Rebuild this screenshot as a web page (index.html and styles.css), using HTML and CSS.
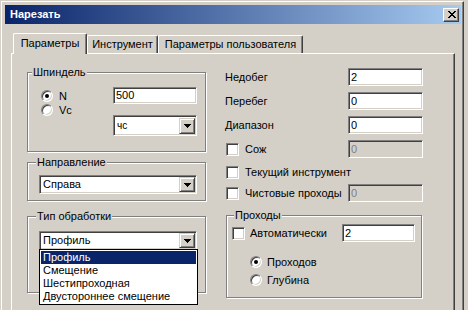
FILE: index.html
```html
<!DOCTYPE html>
<html lang="ru">
<head>
<meta charset="utf-8">
<title>Нарезать</title>
<link rel="stylesheet" href="styles.css">
</head>
<body>
<div class="window">
  <div class="titlebar">
    <span class="title">Нарезать</span>
    <span class="close">
      <svg width="8" height="7" viewBox="0 0 8 7" shape-rendering="crispEdges">
        <path d="M0 0h2v1h-2zM6 0h2v1h-2zM1 1h2v1h-2zM5 1h2v1h-2zM2 2h4v1h-4zM3 3h2v1h-2zM2 4h4v1h-4zM1 5h2v1h-2zM5 5h2v1h-2zM0 6h2v1h-2zM6 6h2v1h-2z" fill="#000"/>
      </svg>
    </span>
  </div>
  <div class="client">
    <div class="tabs">
      <div class="tab tab-sel">Параметры</div>
      <div class="tab tab-tool">Инструмент</div>
      <div class="tab tab-user">Параметры пользователя</div>
    </div>
    <div class="panel">
      <div class="col-left">
        <div class="group g-spindle">
          <div class="gtitle gt-spindle">Шпиндель</div>
          <div class="spindle">
            <div class="radios">
              <div class="radio-row"><span class="radio on"></span><span>N</span></div>
              <div class="radio-row"><span class="radio"></span><span>Vc</span></div>
            </div>
            <div class="spindle-fields">
              <div class="edit e-speed">500</div>
              <div class="combo c-unit"><span class="ctext">чс</span><span class="cbtn"><svg width="7" height="4" viewBox="0 0 7 4" shape-rendering="crispEdges"><path d="M0 0h7v1h-7zM1 1h5v1h-5zM2 2h3v1h-3zM3 3h1v1h-1z" fill="#000"/></svg></span></div>
            </div>
          </div>
        </div>
        <div class="group g-dir">
          <div class="gtitle gt-wide">Направление</div>
          <div class="combo c-wide c-dir"><span class="ctext">Справа</span><span class="cbtn"><svg width="7" height="4" viewBox="0 0 7 4" shape-rendering="crispEdges"><path d="M0 0h7v1h-7zM1 1h5v1h-5zM2 2h3v1h-3zM3 3h1v1h-1z" fill="#000"/></svg></span></div>
        </div>
        <div class="group g-type">
          <div class="gtitle gt-wide">Тип обработки</div>
          <div class="combo c-wide c-type"><span class="ctext">Профиль</span><span class="cbtn"><svg width="7" height="4" viewBox="0 0 7 4" shape-rendering="crispEdges"><path d="M0 0h7v1h-7zM1 1h5v1h-5zM2 2h3v1h-3zM3 3h1v1h-1z" fill="#000"/></svg></span>
            <ul class="dropdown">
              <li class="opt opt-sel">Профиль</li>
              <li class="opt">Смещение</li>
              <li class="opt">Шестипроходная</li>
              <li class="opt">Двустороннее смещение</li>
            </ul>
          </div>
        </div>
      </div>
      <div class="col-right">
        <div class="frow"><span class="flabel">Недобег</span><div class="edit e-num">2</div></div>
        <div class="frow"><span class="flabel">Перебег</span><div class="edit e-num">0</div></div>
        <div class="frow"><span class="flabel">Диапазон</span><div class="edit e-num">0</div></div>
        <div class="frow"><span class="check-row"><span class="check"></span><span>Сож</span></span><div class="edit e-num disabled">0</div></div>
        <div class="frow r-tool"><span class="check-row"><span class="check"></span><span>Текущий инструмент</span></span></div>
        <div class="frow r-finish"><span class="check-row"><span class="check"></span><span>Чистовые проходы</span></span><div class="edit e-num disabled">0</div></div>
        <div class="group g-pass">
          <div class="gtitle gt-pass">Проходы</div>
          <div class="auto-row"><span class="check-row"><span class="check"></span><span>Автоматически</span></span><div class="edit e-auto">2</div></div>
          <div class="pass-radios">
            <div class="radio-row r-big"><span class="radio on"></span><span>Проходов</span></div>
            <div class="radio-row r-big"><span class="radio"></span><span>Глубина</span></div>
          </div>
        </div>
      </div>
    </div>
  </div>
</div>
</body>
</html>
```
FILE: styles.css
```css
* { box-sizing: border-box; margin: 0; padding: 0; }
html, body { width: 468px; height: 310px; overflow: hidden; background: #d4d0c8; }
body { font: 11px/13px "Liberation Sans", Arial, sans-serif; color: #000; }

.window {
  margin: 1px 0 0 1px;
  width: 463px;
  height: 360px;
  border-left: 1px solid #fff;
  border-top: 1px solid #fff;
  border-right: 1px solid #404040;
  border-bottom: 1px solid #404040;
  box-shadow: inset -1px -1px #808080;
  padding: 3px 2px 0 3px;
}

.titlebar {
  height: 19px;
  background: linear-gradient(to right, #0a246a, #a6caf0);
  display: flex;
  align-items: center;
  justify-content: space-between;
  padding: 0 2px 0 5px;
}
.title { color: #fff; font-weight: bold; font-size: 11px; }
.close {
  width: 16px; height: 14px;
  background: #d4d0c8;
  border: 1px solid;
  border-color: #fff #404040 #404040 #fff;
  box-shadow: inset -1px -1px #808080;
  display: flex; align-items: center; justify-content: center;
  padding-left: 1px;
}
.close svg { display: block; }

.client { padding: 0 6px; }

.tabs {
  display: flex;
  align-items: flex-end;
  height: 20px;
  margin-top: 9px;
  padding-left: 2px;
}
.tab {
  height: 18px;
  border: 1px solid #fff;
  border-bottom: 0;
  border-right-color: #404040;
  box-shadow: inset -1px 0 #808080;
  border-radius: 2px 2px 0 0;
  text-align: center;
  line-height: 16px;
  white-space: nowrap;
}
.tab-sel {
  width: 74px;
  height: 21px;
  margin-bottom: -1px;
  position: relative;
  z-index: 1;
  background: #d4d0c8;
  line-height: 18px;
}
.tab-tool { width: 71px; }
.tab-user { width: 145px; }

.panel {
  height: 300px;
  border: 1px solid #fff;
  border-right-color: #404040;
  border-bottom-color: #404040;
  box-shadow: inset -1px -1px #808080;
  display: grid;
  grid-template-columns: 180px 198px;
  column-gap: 18px;
  align-items: start;
  padding-left: 15px;
}

.group {
  border: 1px solid #808080;
  box-shadow: inset 1px 1px #fff, 1px 1px #fff;
}
.gtitle {
  margin-top: -7px;
  padding: 0 1px;
  background: #d4d0c8;
  width: max-content;
  line-height: 13px;
}
.gt-spindle { margin-left: 4px; }
.gt-wide { margin-left: 8px; }
.gt-pass { margin-left: 7px; }

.col-left { display: flex; flex-direction: column; padding-top: 18px; }
.g-spindle { width: 179px; height: 80px; }
.g-dir { width: 179px; height: 39px; margin-top: 10px; }
.g-type { width: 179px; height: 77px; margin-top: 15px; }

.spindle { display: flex; padding-left: 13px; }
.radios { width: 72px; margin-top: 10px; }
.radio-row { display: flex; align-items: center; height: 14px; gap: 6px; white-space: nowrap; }
.radio {
  position: relative;
  width: 12px; height: 12px;
  border-radius: 50%;
  background: #fff;
  border: 1px solid;
  border-color: #808080 #fff #fff #808080;
  box-shadow: inset 1px 1px #404040, inset -1px -1px #d4d0c8;
  flex: none;
}
.radio.on::after {
  content: "";
  position: absolute;
  left: 3px; top: 3px;
  width: 4px; height: 4px;
  border-radius: 50%;
  background: #000;
}
.spindle-fields { width: 84px; display: flex; flex-direction: column; }

.edit {
  height: 18px;
  background: #fff;
  border: 1px solid;
  border-color: #808080 #fff #fff #808080;
  box-shadow: inset 1px 1px #404040, inset -1px -1px #d4d0c8;
  padding-left: 2px;
  line-height: 16px;
  white-space: nowrap;
}
.edit.disabled { background: #d4d0c8; color: #808080; }
.e-speed { height: 17px; margin-top: 8px; line-height: 15px; }
.e-num { width: 75px; }
.e-auto { width: 73px; }

.combo {
  position: relative;
  display: flex;
  align-items: center;
  height: 20px;
  background: #fff;
  border: 1px solid;
  border-color: #808080 #fff #fff #808080;
  box-shadow: inset 1px 1px #404040, inset -1px -1px #d4d0c8;
  padding: 1px 1px 1px 3px;
}
.ctext { flex: 1; white-space: nowrap; }
.cbtn {
  width: 16px; height: 16px;
  background: #d4d0c8;
  border: 1px solid;
  border-color: #d4d0c8 #404040 #404040 #d4d0c8;
  box-shadow: inset 1px 1px #fff, inset -1px -1px #808080;
  display: flex; align-items: center; justify-content: center;
  flex: none;
}
.cbtn svg { display: block; }
.c-unit { margin-top: 11px; height: 21px; }
.c-unit .ctext { font-size: 10px; }
.c-wide { width: 158px; margin-left: 11px; }
.c-dir { margin-top: 6px; height: 19px; }
.c-dir .cbtn { height: 15px; }
.c-type { margin-top: 8px; height: 19px; }
.c-type .cbtn { height: 15px; }

.dropdown {
  list-style: none;
  position: absolute;
  left: -1px; top: 100%;
  width: 159px;
  background: #fff;
  border: 1px solid #000;
  padding: 1px 0 1px 1px;
  z-index: 5;
}
.opt { height: 13px; line-height: 13px; padding-left: 2px; margin-right: 1px; white-space: nowrap; }
.opt-sel { background: #0a246a; color: #fff; }

.col-right { display: flex; flex-direction: column; padding-top: 14px; }
.frow {
  display: flex;
  align-items: center;
  justify-content: space-between;
  height: 18px;
  margin-bottom: 6px;
}
.r-tool { margin-top: -1px; margin-bottom: 3px; }
.check-row { display: flex; align-items: center; gap: 6px; white-space: nowrap; padding-left: 1px; }
.check {
  width: 13px; height: 13px;
  background: #fff;
  border: 1px solid;
  border-color: #808080 #fff #fff #808080;
  box-shadow: inset 1px 1px #404040, inset -1px -1px #d4d0c8;
  flex: none;
}

.g-pass { width: 196px; height: 83px; margin-left: 1px; margin-top: 7px; }
.auto-row {
  display: flex; align-items: center; justify-content: space-between;
  height: 18px; margin-top: 2px;
  padding: 0 6px 0 4px;
}
.auto-row .check-row { gap: 5px; }
.pass-radios { padding-left: 23px; margin-top: 13px; display: flex; flex-direction: column; gap: 4px; }
.r-big { gap: 5px; }
```
